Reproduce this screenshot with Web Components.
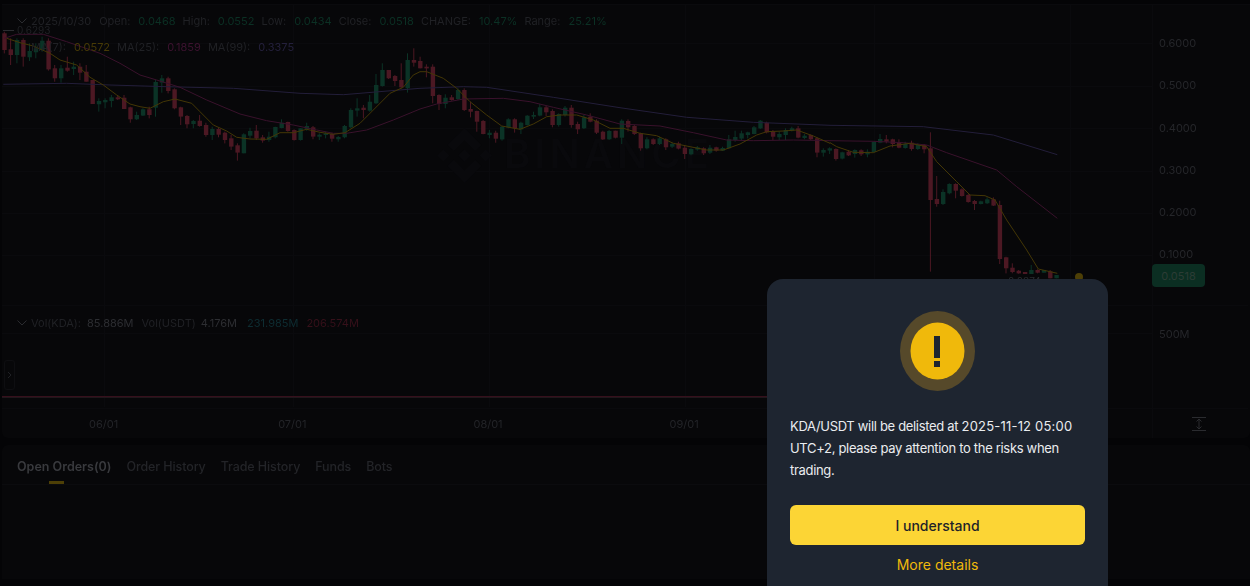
<!DOCTYPE html>
<html lang="en">
<head>
<meta charset="utf-8">
<title>KDA/USDT</title>
<style>
  html, body { margin: 0; height: 100%; overflow: hidden; }
  body { background: #040406; font-family: Inter, "Liberation Sans", sans-serif; }
</style>
</head>
<body>
<chart-panel></chart-panel>
<orders-tabs></orders-tabs>
<delist-modal>
  KDA/USDT will be delisted at <span style="letter-spacing:.2px">2025-11-12 05:00</span> UTC+2, please pay attention to the risks when trading.
</delist-modal>

<script>
// candles read off the 3x crops: [colour, body top, body bottom, wick top, wick bottom]
const candles = `r100,150,95,160 r148,165,115,195 g120,165,115,190 r120,170,115,200 g153,172,130,183 g145,157,130,175 g122,150,110,155 r122,208,115,212 r205,235,195,245 g205,235,195,248
r203,212,170,215 g200,207,185,225 r200,218,190,240 r215,245,195,245 r240,312,240,312 g303,313,295,335 g300,307,295,325 g292,303,285,322 r292,298,285,300 r293,327,285,327
r322,358,320,368 g345,358,335,360 g328,347,325,348 r328,345,320,355 g246,323,240,350 g235,248,225,278 r235,273,230,280 r268,325,265,328 r322,350,320,375 r348,373,345,385
g363,372,360,385 r362,378,345,380 r375,405,368,410 g387,405,380,420 r387,404,382,412 r398,420,395,430 r415,440,405,450 r436,458,430,482 g403,460,400,460 g393,407,383,415
r392,415,375,420 r412,422,405,428 g410,420,395,425 g381,412,380,415 g368,384,358,385 r366,393,365,395 r390,420,388,422 g385,420,385,422 g378,388,368,392 r382,410,378,418
g404,410,400,420 g400,405,395,415 r402,416,398,425 g411,418,408,425 g378,412,375,415 g330,382,325,385 g325,332,295,350 r323,330,315,355 g305,332,285,335 g255,310,222,312
g210,258,190,260 r210,235,210,237 r228,243,225,258 r240,262,190,265 g180,265,160,278 r180,188,145,200 r183,205,170,205 r200,205,193,232 r200,288,193,310 r285,312,283,330
g293,312,283,325 r292,300,285,302 g270,297,265,300 r270,330,265,333 r327,335,305,352 r333,365,332,395 r363,402,360,403 g398,405,390,415 r398,416,392,428 g380,418,378,422
g358,383,355,385 r358,385,355,398 g368,388,365,402 g347,375,345,377 g345,350,335,357 g322,347,312,349 r322,337,318,348 r333,375,328,382 g342,375,340,380 g323,345,318,350
r323,375,315,383 r372,388,365,402 g352,385,345,387 r350,365,340,367 r362,398,358,402 r395,418,392,420 g393,418,390,420 r392,413,392,415 g362,413,358,432 r363,382,358,395
r378,402,375,405 r400,445,398,452 g418,445,412,448 r418,432,415,435 g415,432,410,435 r418,442,415,450 g432,440,428,444 r430,446,425,448 r443,462,435,477 g447,463,445,466
g442,449,438,452 r445,460,442,465 g443,458,435,462 r442,452,440,455 g444,452,440,453 g418,445,405,447 g411,420,392,425 g400,416,392,420 g397,405,395,415 g382,402,378,403
g362,385,360,387 r368,397,365,400 r395,410,390,420 g402,412,395,420 g390,405,385,420 g385,392,380,394 r385,413,378,415 g407,414,402,418 r405,418,403,420 r415,458,412,472
g450,458,445,470 g445,452,442,462 r447,477,445,482 g457,476,455,478 r455,466,450,468 g450,462,448,473 r451,463,448,468 g455,463,448,472 g426,456,424,458 g417,428,402,430
r418,425,405,430 r418,432,416,442 r428,443,418,445 g432,444,425,446 r428,447,422,452 g435,447,430,450 r435,448,432,460 r445,600,397,815 r597,612,528,620 g576,612,568,615
g552,580,550,583 r552,572,550,595 r568,588,565,590 r585,606,582,608 r603,612,600,630 g604,612,602,613 g598,610,592,612 r598,617,592,618 r615,777,602,792 r772,805,770,820
r803,816,790,820 r812,820,810,821 r816,822,816,822 g810,822,795,822 r810,818,808,820 g810,818,810,818 r814,835,810,835 g825,835,825,835`.split(/\s+/);

// line points per crop: crop x offset, then x,y pairs in 3x crop pixels
const ma7 = [[0, '20,115 60,128 100,138 150,160 180,180 230,195 270,232 310,255 350,285 390,312 420,320 450,325 490,305 525,297 575,310 600,335 640,375 680,393 710,412 750,417 800,418 840,398 880,398 920,388 960,397 1000,403 1035,398 1080,370 1120,330 1170,280 1210,262 1240,225'],
  [420, '0,215 20,215 70,235 110,265 150,305 200,345 245,378 300,388 340,372 380,350 420,345 470,345 520,360 570,385 610,385 660,400 710,407 760,430 810,440 860,450 910,450 960,432 1010,405 1040,395 1090,393 1130,390 1180,408 1230,430'],
  [830, '0,428 20,440 70,457 130,458 180,438 240,430 290,440 320,485 380,545 420,585 465,587 495,600 530,660 590,750 625,807 682,820']];
const ma25 = [[0, '13,115 50,103 130,103 200,125 300,160 360,190 420,225 470,240 540,262 620,300 720,342 800,362 880,375 950,390 1000,400 1040,400 1100,390 1180,360'],
  [420, '0,327 50,312 130,297 250,295 330,305 400,322 500,345 600,372 720,378 820,398 920,420 1000,422 1120,420'],
  [830, '0,422 130,424 220,428 290,435 350,458 500,510 560,560 682,655']];
const ma99 = [[0, '10,253 200,250 330,255 500,260 700,265 900,280 1030,284'],
  [420, '0,265 130,260 200,262 400,292 600,323 800,352 1000,367'],
  [830, '0,376 280,380 490,405 682,464']];

const toPoints = (parts) => parts.map(([off, pts]) => pts.split(' ').map((p) => {
  const [x, y] = p.split(',');
  return `${(off + x / 3).toFixed(1)},${(y / 3).toFixed(1)}`;
}).join(' ')).join(' ');

const candleMarkup = () => candles.map((c, i) => {
  const fill = c[0] === 'g' ? '#0b3326' : '#4c1823';
  const [top, bottom, high, low] = c.slice(1).split(',').map((n) => n / 3);
  const x = 4.3 + i * 6.3;
  return `<rect x="${(x - 0.5).toFixed(1)}" y="${high.toFixed(1)}" width="1" height="${(low - high).toFixed(1)}" fill="${fill}"/>` +
    `<rect x="${(x - 2).toFixed(1)}" y="${top.toFixed(1)}" width="4.4" height="${Math.max(bottom - top, 1).toFixed(1)}" fill="${fill}"/>`;
}).join('');

class LegendRow extends HTMLElement {
  constructor() {
    super();
    this.attachShadow({ mode: 'open' });
    this.shadowRoot.innerHTML = `
    <style>
    :host {
        display: flex;
        align-items: center;
        gap: 8px;
        height: 16px;
        font-size: 11px;
        line-height: 11px;
        color: #202125;
        white-space: nowrap;
    }
    svg { flex: none; margin-right: -4px; }
    </style>
    <svg width="10" height="6" viewBox="0 0 10 6"><path d="M.5.5 5 5 9.5.5" fill="none" stroke="${this.hasAttribute('hide-arrow') ? 'none' : '#2a2b2f'}" stroke-width="1"/></svg>
    <slot></slot>`;
  }
}

class PriceChart extends HTMLElement {
  constructor() {
    super();
    this.attachShadow({ mode: 'open' });
    this.shadowRoot.innerHTML = `
    <style>
    :host { display: block; position: relative; height: 301px; border-bottom: 1px solid #0a0a0d; box-sizing: border-box; }
    svg { position: absolute; left: 0; top: 0; }
    .legend { position: absolute; left: 15px; top: 8px; display: flex; flex-direction: column; gap: 10px; }
    b { font-weight: 400; margin-right: -1px; }
    .up { color: #0b3024; }
    .y { color: #473a06; } .p { color: #3d1330; } .v { color: #24203c; }
    .mark { position: absolute; left: 1px; top: 21px; font-size: 10px; line-height: 9px; color: #202125; display: flex; align-items: flex-start; gap: 3px; }
    .mark i { width: 11px; height: 1px; background: #2c2c30; margin-top: 4px; }
    .low { font: 10px Inter, sans-serif; fill: #2a2b2f; }
    </style>
    <svg width="1150" height="301" viewBox="2 5 1150 301">
      <g stroke="#0a0a0d" fill="none">
        ${[43, 86, 128, 171, 213, 255].map((y) => `<path d="M2 ${y + .5}H1152"/>`).join('')}
        ${[104, 293, 489, 685, 874, 1070].map((x) => `<path d="M${x + .5} 4V305"/>`).join('')}
      </g>
      <g fill="#09090c">
        <path transform="translate(437 128) scale(.434)" d="M38.73 53.2l24.59-24.58 24.6 24.6 14.3-14.31L63.32 0 24.43 38.89zM0 63.31l14.3-14.31 14.31 14.31-14.31 14.3zM38.73 73.41l24.59 24.59 24.6-24.6 14.31 14.29-38.9 38.91-38.91-38.88-.02-.02zM98.01 63.31l14.3-14.3 14.3 14.3-14.3 14.31zM77.83 63.3L63.32 48.78 52.59 59.51l-1.24 1.23-2.54 2.54 14.51 14.52 14.51-14.51z"/>
        <text x="504" y="168" font-size="40" font-family="Inter, sans-serif" font-weight="600" letter-spacing="4">BINANCE</text>
      </g>
      ${candleMarkup()}
      <polyline points="${toPoints(ma99)}" fill="none" stroke="#231e3a"/>
      <polyline points="${toPoints(ma25)}" fill="none" stroke="#3a122c"/>
      <polyline points="${toPoints(ma7)}" fill="none" stroke="#443706"/>
      <circle cx="1079" cy="277" r="4" fill="#4d3f06"/>
      <text class="low" x="1008" y="285">0.0374</text>
    </svg>
    <div class="mark"><i></i><span>0.6293</span></div>
    <div class="legend">
      <legend-row><span>2025/10/30</span>
        <span>Open:</span><b class="up">0.0468</b><span>High:</span><b class="up">0.0552</b><span>Low:</span><b class="up">0.0434</b><span>Close:</span><b class="up">0.0518</b><span>CHANGE:</span><b class="up">10.47%</b><span>Range:</span><b class="up">25.21%</b>
      </legend-row>
      <legend-row hide-arrow><span>MA(7):</span><b class="y">0.0572</b><span>MA(25):</span><b class="p">0.1859</b><span>MA(99):</span><b class="v">0.3375</b></legend-row>
    </div>`;
  }
}

class VolumePane extends HTMLElement {
  constructor() {
    super();
    this.attachShadow({ mode: 'open' });
    this.shadowRoot.innerHTML = `
    <style>
    :host { display: block; position: relative; height: 102px; }
    svg { position: absolute; left: 0; top: 0; }
    legend-row { position: absolute; left: 15px; top: 9px; }
    b { font-weight: 400; }
    .first { margin-left: -2px; }
    .second { margin-left: -3px; margin-right: 2px; }
    .w { color: #2d2e32; } .t { color: #0e2d32; } .r { color: #36101a; }
    .toggle {
        position: absolute; left: 2px; top: 54px; width: 11px; height: 30px;
        border: 1px solid #0e0e11; border-radius: 3px; box-sizing: border-box;
        display: flex; align-items: center; justify-content: center;
    }
    </style>
    <svg width="1150" height="102" viewBox="2 306 1150 102">
      <g stroke="#0a0a0d" fill="none">
        <path d="M2 333.5H1152"/>
        ${[104, 293, 489, 685, 874, 1070].map((x) => `<path d="M${x + .5} 305V407"/>`).join('')}
      </g>
      <rect x="1" y="397" width="1060" height="1" fill="#0a1f1a"/>
      <rect x="1" y="396" width="1060" height="1.5" fill="#36101c"/>
    </svg>
    <legend-row><span>Vol(KDA):</span><b class="w first">85.886M</b><span>Vol(USDT)</span><b class="w second">4.176M</b><b class="t">231.985M</b><b class="r">206.574M</b></legend-row>
    <div class="toggle"><svg style="position:static" width="5" height="8" viewBox="0 0 5 8"><path d="M1 1l3 3-3 3" fill="none" stroke="#202125"/></svg></div>`;
  }
}

class AxisColumn extends HTMLElement {
  constructor() {
    super();
    this.attachShadow({ mode: 'open' });
    this.shadowRoot.innerHTML = `
    <style>
    :host {
        display: flex; flex-direction: column; flex: none; width: 96px; position: relative;
        border-left: 1px solid #0a0a0d; box-sizing: border-box; font-size: 11px; color: #25262a;
    }
    .ticks { height: 301px; padding: 31px 0 0 6px; box-sizing: border-box; border-bottom: 1px solid #0a0a0d; }
    .ticks div { height: 42.3px; }
    .vol { height: 102px; padding: 21px 0 0 6px; box-sizing: border-box; }
    .tag {
        position: absolute; left: -1px; top: 259px; width: 53px; height: 23px; border-radius: 4px;
        background: #0b2e22; color: #2c3c35; display: flex; align-items: center; justify-content: center;
    }
    .fit { height: 30px; border-top: 1px solid #0a0a0d; display: flex; justify-content: center; align-items: center; padding-right: 4px; box-sizing: border-box;}
    </style>
    <div class="ticks"><div>0.6000</div><div>0.5000</div><div>0.4000</div><div>0.3000</div><div>0.2000</div><div>0.1000</div></div>
    <div class="tag">0.0518</div>
    <div class="vol">500M</div>
    <div class="fit"><svg width="14" height="14" viewBox="0 0 14 14" fill="none" stroke="#2a2b2f"><path d="M0 .5H14M0 13.5H14M7 2v10"/><path d="M4.5 4.5 7 2l2.5 2.5M4.5 9.5 7 12l2.5-2.5" /></svg></div>`;
  }
}

class TimeAxis extends HTMLElement {
  constructor() {
    super();
    this.attachShadow({ mode: 'open' });
    this.shadowRoot.innerHTML = `
    <style>
    :host {
        display: flex; height: 30px; padding-left: 87px; gap: 160px; align-items: center; box-sizing: border-box;
        border-top: 1px solid #0a0a0d; font-size: 11px; color: #232428;
    }
    </style>
    <span>06/01</span><span style="margin-right:7px">07/01</span><span style="margin-right:7px">08/01</span><span>09/01</span>`;
  }
}

class ChartPanel extends HTMLElement {
  constructor() {
    super();
    this.attachShadow({ mode: 'open' });
    this.shadowRoot.innerHTML = `
    <style>
    :host {
        display: flex; margin: 4px 0 0 2px; height: 433px; width: 1248px; background: #070709;
        border-radius: 0 0 6px 6px; border-top: 1px solid #0a0a0d; box-sizing: content-box; overflow: hidden;
        filter: blur(.5px);
    }
    .plots { width: 1150px; flex: none; }
    </style>
    <div class="plots"><price-chart></price-chart><volume-pane></volume-pane><time-axis></time-axis></div>
    <axis-column></axis-column>`;
  }
}

class OrdersTabs extends HTMLElement {
  constructor() {
    super();
    this.attachShadow({ mode: 'open' });
    this.shadowRoot.innerHTML = `
    <style>
    :host {
        display: flex; gap: 15px; margin: 7px 0 0 2px; height: 134px; padding: 0 15px; box-sizing: border-box;
        background: #070709; border-radius: 6px 6px 0 0; font-size: 12.5px; align-items: flex-start;
        font-weight: 500; color: #232428; letter-spacing: -.1px; position: relative; filter: blur(.5px);
    }
    span { margin-top: 14px; line-height: 16px; }
    .on { color: #393a3e; font-weight: 600; letter-spacing: 0; }
    .line { position: absolute; left: 0; right: 0; top: 39px; height: 1px; background: #0b0b0e; }
    .bar { position: absolute; left: 47px; top: 36px; width: 15px; height: 3px; background: #4d3f06; }
    </style>
    <span class="on">Open Orders(0)</span><span>Order History</span><span>Trade History</span><span>Funds</span><span>Bots</span>
    <div class="line"></div><div class="bar"></div>`;
  }
}

class DelistModal extends HTMLElement {
  constructor() {
    super();
    this.attachShadow({ mode: 'open' });
    this.shadowRoot.innerHTML = `
    <style>
    :host {
        position: fixed; left: 767px; top: 279px; width: 341px; height: 340px; box-sizing: border-box;
        padding: 32px 23px 0; background: #1e2530; border-radius: 16px;
        display: flex; flex-direction: column; align-items: center; color: #eaecef;
    }
    .icon { flex: none; display: block; }
    .msg { align-self: stretch; margin: 24px 0 24px; font-size: 13px; line-height: 22px; letter-spacing: -.32px; }
    button {
        flex: none; align-self: stretch; height: 40px; border: 0; border-radius: 6px; background: #fcd535;
        color: #1e2329; font: 500 14px Inter, sans-serif;
    }
    a { margin-top: 11px; color: #f0b90b; font-size: 14px; line-height: 18px; text-decoration: none; }
    </style>
    <svg class="icon" width="75" height="80" viewBox="0 0 75 80">
      <ellipse cx="37.5" cy="40" rx="37.5" ry="40" fill="#56492a"/>
      <ellipse cx="37.5" cy="40" rx="27" ry="28.5" fill="#f0b90b"/>
      <rect x="34" y="25" width="6" height="22" fill="#1e2530"/>
      <rect x="34" y="50" width="6" height="6" fill="#1e2530"/>
    </svg>
    <div class="msg"><slot></slot></div>
    <button type="button">I understand</button>
    <a href="#">More details</a>`;
  }
}

customElements.define('legend-row', LegendRow);
customElements.define('price-chart', PriceChart);
customElements.define('volume-pane', VolumePane);
customElements.define('axis-column', AxisColumn);
customElements.define('time-axis', TimeAxis);
customElements.define('chart-panel', ChartPanel);
customElements.define('orders-tabs', OrdersTabs);
customElements.define('delist-modal', DelistModal);
</script>
</body>
</html>
